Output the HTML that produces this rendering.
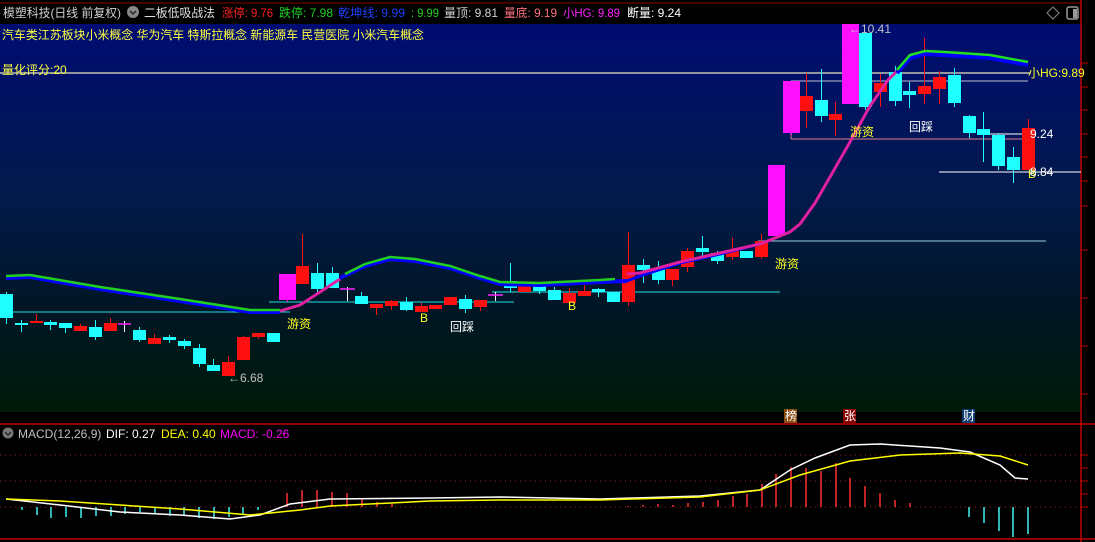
<!DOCTYPE html>
<html><head><meta charset="utf-8"><style>
html,body{margin:0;padding:0;background:#000;width:1095px;height:542px;overflow:hidden}
svg text{font-family:"Liberation Sans","Noto Sans CJK SC",sans-serif}
</style></head><body>
<svg id="s" width="1095" height="542" xmlns="http://www.w3.org/2000/svg">
<defs><linearGradient id="bg" x1="0" y1="0" x2="0" y2="1">
<stop offset="0" stop-color="#000c72"/><stop offset="0.45" stop-color="#021a4a"/><stop offset="0.7" stop-color="#02162a"/><stop offset="1" stop-color="#001a08"/></linearGradient></defs>
<rect x="0" y="0" width="1095" height="542" fill="#000"/>
<rect x="0" y="24" width="1081" height="388" fill="url(#bg)"/>
<line x1="0" y1="3" x2="1081" y2="3" stroke="#8a0000" stroke-width="1"/>
<line x1="1081" y1="0" x2="1081" y2="542" stroke="#c00000" stroke-width="1.5"/>
<line x1="0" y1="424" x2="1095" y2="424" stroke="#c00000" stroke-width="1.5"/>
<line x1="0" y1="539" x2="1095" y2="539" stroke="#c00000" stroke-width="1.5"/>
<g stroke="#b00" stroke-width="1">
<line x1="1081" y1="63" x2="1088" y2="63"/><line x1="1081" y1="87" x2="1088" y2="87"/><line x1="1081" y1="110" x2="1088" y2="110"/><line x1="1081" y1="134" x2="1088" y2="134"/><line x1="1081" y1="157" x2="1088" y2="157"/><line x1="1081" y1="181" x2="1088" y2="181"/><line x1="1081" y1="206" x2="1088" y2="206"/><line x1="1081" y1="250" x2="1088" y2="250"/><line x1="1081" y1="298" x2="1088" y2="298"/><line x1="1081" y1="346" x2="1088" y2="346"/><line x1="1081" y1="394" x2="1088" y2="394"/>
<line x1="1081" y1="455" x2="1088" y2="455"/><line x1="1081" y1="468" x2="1088" y2="468"/><line x1="1081" y1="481" x2="1088" y2="481"/><line x1="1081" y1="494" x2="1088" y2="494"/><line x1="1081" y1="507" x2="1088" y2="507"/>
</g>
<g stroke="#a02020" stroke-dasharray="1,4"><line x1="0" y1="455" x2="1081" y2="455"/><line x1="0" y1="481" x2="1081" y2="481"/><line x1="0" y1="507" x2="1081" y2="507"/></g>
<line x1="0" y1="73" x2="1030" y2="73" stroke="#e8e8c0" stroke-width="1.3"/>
<line x1="791" y1="81" x2="1028" y2="81" stroke="#c0c0d0"/>
<line x1="791" y1="139" x2="1028" y2="139" stroke="#e08090"/>
<line x1="791" y1="128" x2="791" y2="139" stroke="#e08090"/>
<line x1="983" y1="134" x2="1028" y2="134" stroke="#fff"/>
<line x1="939" y1="172" x2="1081" y2="172" stroke="#fff"/>
<line x1="758" y1="241" x2="1046" y2="241" stroke="#a0d0e0"/>
<line x1="0" y1="312" x2="290" y2="312" stroke="#20e0e0"/>
<line x1="269" y1="302" x2="514" y2="302" stroke="#20e0e0"/>
<line x1="492" y1="292" x2="780" y2="292" stroke="#20e0e0"/>
<g id="c"></g>
<polyline fill="none" stroke="#00f" stroke-width="4" points="6,278 30,277 100,289 180,301 250,312 280,312"/>
<polyline fill="none" stroke="#20d020" stroke-width="2.5" points="6,276 30,275 100,287 180,299 250,310 280,310"/>
<polyline fill="none" stroke="#e020a0" stroke-width="3" points="280,311 300,305 320,292 340,279"/>
<polyline fill="none" stroke="#00f" stroke-width="4" points="340,278 365,266 390,259 415,261 450,268 480,278 500,284 540,285 600,282 627,281"/>
<polyline fill="none" stroke="#20d020" stroke-width="2.5" points="345,274 365,264 390,257 415,259 450,266 480,276 500,282 540,283 600,280 615,279"/>
<polyline fill="none" stroke="#00f" stroke-width="3" points="627,281 640,276 680,263 720,254 760,244"/>
<polyline fill="none" stroke="#e020a0" stroke-width="3" points="627,274 640,273 680,262 720,253 760,244 790,232 800,224 815,203 830,177 850,142 870,106 888,80 897,71"/>
<polyline fill="none" stroke="#00f" stroke-width="4" points="897,73 910,58 925,54 945,55 990,58 1028,65"/>
<polyline fill="none" stroke="#20e020" stroke-width="2.5" points="897,70 910,55 925,51 945,52 990,55 1028,62"/>
<g id="m"></g>
<polyline fill="none" stroke="#fff" stroke-width="1.5" points="6,499 60,505 120,512 180,515 230,519 260,515 290,504 330,499 430,498 500,497 600,499 700,496 760,490 790,470 815,458 850,445 880,444 940,448 970,452 1000,465 1015,478 1028,479"/>
<polyline fill="none" stroke="#ff0" stroke-width="1.5" points="6,499 60,501 120,505 180,509 250,515 300,510 330,506 430,501 500,500 600,500 700,497 760,490 800,475 850,461 900,455 960,453 1000,456 1028,465"/>
<g font-size="12">
<text x="3" y="17" fill="#d0d0d0" textLength="118" lengthAdjust="spacingAndGlyphs">模塑科技(日线 前复权)</text>
<text x="144" y="17" fill="#e0e0e0" textLength="71" lengthAdjust="spacingAndGlyphs">二板低吸战法</text>
<text x="222" y="17" fill="#ff2020" textLength="51" lengthAdjust="spacingAndGlyphs">涨停: 9.76</text>
<text x="279" y="17" fill="#20d020" textLength="54" lengthAdjust="spacingAndGlyphs">跌停: 7.98</text>
<text x="338" y="17" fill="#2040ff" textLength="67" lengthAdjust="spacingAndGlyphs">乾坤线: 9.99</text>
<text x="411" y="17" fill="#20d020" textLength="28" lengthAdjust="spacingAndGlyphs">: 9.99</text>
<text x="444" y="17" fill="#d0d0d0" textLength="54" lengthAdjust="spacingAndGlyphs">量顶: 9.81</text>
<text x="504" y="17" fill="#ff7080" textLength="53" lengthAdjust="spacingAndGlyphs">量底: 9.19</text>
<text x="563" y="17" fill="#ff20ff" textLength="57" lengthAdjust="spacingAndGlyphs">小HG: 9.89</text>
<text x="627" y="17" fill="#fff" textLength="54" lengthAdjust="spacingAndGlyphs">断量: 9.24</text>
</g>
<circle cx="133" cy="12" r="6" fill="#888"/><path d="M130,11 L133,14 L136,11" stroke="#222" stroke-width="1.5" fill="none"/>
<path d="M1053,7 L1059,13 L1053,19 L1047,13 Z" stroke="#888" fill="none"/>
<rect x="1067" y="7" width="11" height="12" rx="2" stroke="#999" fill="none" stroke-width="1.5"/><rect x="1073" y="9" width="4" height="9" fill="#999"/>
<text x="2" y="39" font-size="12" fill="#ffff40" textLength="422" lengthAdjust="spacingAndGlyphs">汽车类江苏板块小米概念 华为汽车 特斯拉概念 新能源车 民营医院 小米汽车概念</text>
<text x="2" y="74" font-size="12" fill="#ffff40">量化评分:20</text>
<g font-size="12" fill="#ffff20"><text x="287" y="328">游资</text><text x="775" y="268">游资</text><text x="850" y="136">游资</text>
<text x="420" y="322">B</text><text x="568" y="310">B</text><text x="1028" y="178">B</text>
<text x="1028" y="77">小HG:9.89</text></g>
<g font-size="12" fill="#fff"><text x="450" y="331">回踩</text><text x="909" y="131">回踩</text><text x="1030" y="138">9.24</text><text x="1030" y="176">8.84</text></g>
<text x="228" y="382" font-size="12" fill="#c0c0c0">←6.68</text>
<text x="849" y="33" font-size="12" fill="#c0c0c0">←10.41</text>
<rect x="784" y="409" width="13" height="14" fill="#8a4a10"/><text x="785" y="420" font-size="12" fill="#fff">榜</text>
<rect x="843" y="409" width="13" height="14" fill="#800"/><text x="844" y="420" font-size="12" fill="#fff">张</text>
<rect x="962" y="409" width="13" height="14" fill="#0a3a70"/><text x="963" y="420" font-size="12" fill="#fff">财</text>
<circle cx="8" cy="433" r="5.5" fill="#777"/><path d="M5,432 L8,435 L11,432" stroke="#222" stroke-width="1.3" fill="none"/>
<text x="18" y="438" font-size="12" fill="#c0c0c0">MACD(12,26,9)</text>
<text x="106" y="438" font-size="12" fill="#fff">DIF: 0.27</text>
<text x="161" y="438" font-size="12" fill="#ff0">DEA: 0.40</text>
<text x="220" y="438" font-size="12" fill="#f0f">MACD: -0.26</text>
</svg>
<script>
var C=[
[0,13,294,318,292,324,'c'],[15,28,323,325,320,332,'c'],[30,43,321,323,314,323,'r'],[44,57,322,325,320,330,'c'],[59,72,323,328,323,333,'c'],[74,87,326,331,324,331,'r'],[89,102,327,337,320,340,'c'],[104,117,323,331,318,331,'r'],[118,131,324,326,321,332,'x'],[133,146,330,340,327,342,'c'],[148,161,338,344,334,344,'r'],[163,176,337,340,335,343,'c'],[178,191,341,346,339,349,'c'],[193,206,348,364,344,367,'c'],[207,220,365,371,359,371,'c'],[222,235,362,376,356,376,'r'],[237,250,337,360,336,360,'r'],[252,265,333,337,333,339,'r'],[267,280,333,342,333,342,'c'],[279,296,274,300,274,302,'m'],[296,309,266,284,234,284,'r'],[311,324,273,289,263,293,'c'],[326,339,273,288,267,288,'c'],[340,355,289,291,287,301,'x'],[355,368,296,304,292,304,'c'],[370,383,304,308,304,315,'r'],[385,398,301,306,300,310,'r'],[400,413,302,310,297,311,'c'],[415,428,306,312,303,312,'r'],[429,442,305,309,305,309,'r'],[444,457,297,305,297,305,'r'],[459,472,299,309,295,313,'c'],[474,487,300,307,300,311,'r'],[488,503,295,297,292,301,'x'],[504,517,281,288,263,292,'c'],
[518,531,284,292,284,292,'r'],[533,546,284,291,282,294,'c'],[548,561,290,300,287,300,'c'],[563,576,293,303,288,303,'r'],[578,591,291,296,285,296,'r'],[592,605,289,292,288,297,'c'],[607,620,292,302,292,302,'c'],[622,635,265,302,232,306,'r'],[637,650,265,270,259,283,'c'],[652,665,269,280,261,284,'c'],[666,679,269,280,269,286,'r'],[681,694,251,267,248,272,'r'],[696,709,248,252,236,258,'c'],[711,724,253,261,251,264,'c'],[726,739,251,257,238,260,'r'],[740,753,251,258,251,258,'c'],[755,768,241,257,234,259,'r'],[768,785,165,236,165,236,'m'],
[783,800,81,133,81,135,'m'],[800,813,96,111,73,128,'r'],[815,828,100,116,69,122,'c'],[829,842,114,120,102,136,'r'],[842,859,24,104,24,104,'m'],[859,872,33,107,33,110,'c'],[874,887,83,92,74,107,'r'],[889,902,72,101,66,106,'c'],[903,916,91,95,82,108,'c'],[918,931,86,94,38,104,'r'],[933,946,77,89,71,104,'r'],[948,961,75,103,68,107,'c'],[963,976,116,133,115,138,'c'],[977,990,129,135,112,162,'c'],[992,1005,135,166,133,170,'c'],[1007,1020,157,170,147,183,'c'],[1022,1035,128,170,119,170,'r']];
var col={c:'#20ffff',r:'#ff1010',m:'#ff10ff'},h='';
C.forEach(function(a){var x=(a[0]+a[1])/2;
if(a[6]=='x'){h+='<line x1="'+x+'" y1="'+a[4]+'" x2="'+x+'" y2="'+a[5]+'" stroke="#fff"/><line x1="'+a[0]+'" y1="'+a[2]+'" x2="'+a[1]+'" y2="'+a[2]+'" stroke="#ff20ff" stroke-width="1.5"/>';return;}
var c=col[a[6]];h+='<line x1="'+x+'" y1="'+a[4]+'" x2="'+x+'" y2="'+a[5]+'" stroke="'+c+'"/><rect x="'+a[0]+'" y="'+a[2]+'" width="'+(a[1]-a[0])+'" height="'+Math.max(2,a[3]-a[2])+'" fill="'+c+'"/>';});
document.getElementById('c').innerHTML=h;
var M=[[22,510],[37,515],[51,518],[66,517],[81,518],[96,516],[111,516],[125,514],[140,512],[155,514],[170,516],[184,516],[199,518],[214,519],[229,517],[243,514],[258,510],[287,493],[302,490],[317,490],[332,492],[347,493],[362,498],[377,502],[392,504],[628,506],[643,505],[658,504],[673,505],[688,503],[703,502],[718,500],[733,496],[747,494],[762,484],[776,474],[791,467],[806,468],[821,471],[836,463],[850,478],[865,486],[880,493],[895,500],[910,503],[969,517],[984,523],[999,531],[1013,537],[1028,534]];
var g='';M.forEach(function(b){var c=b[1]>507?'#40f0f0':'#ff3030';g+='<line x1="'+b[0]+'" y1="507" x2="'+b[0]+'" y2="'+b[1]+'" stroke="'+c+'" stroke-width="1.5"/>';});
document.getElementById('m').innerHTML=g;
</script>
</body></html>
